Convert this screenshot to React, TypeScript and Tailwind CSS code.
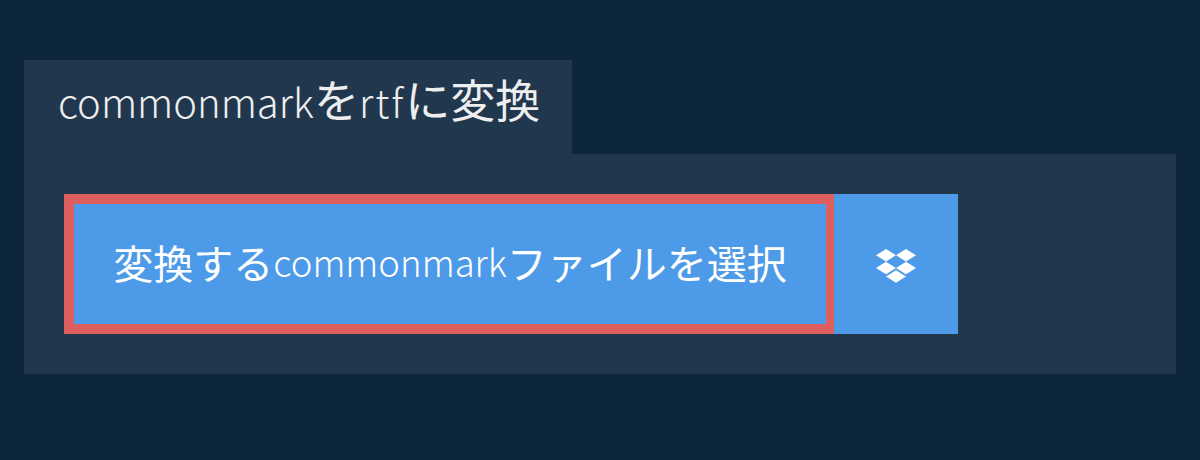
function DropboxIcon() {
  return (
    <svg viewBox="0 0 40 34" className="mt-1 h-[34px] w-10 fill-white">
      <path d="M10 0l10 6.3-10 6.3L0 6.3z" />
      <path d="M30 0l10 6.3-10 6.3-10-6.3z" />
      <path d="M10 12.7L20 19l-10 6.3L0 19z" />
      <path d="M30 12.7L40 19l-10 6.3L20 19z" />
      <path d="M20 21.2l10 6.3L20 33.8l-10-6.3z" />
    </svg>
  );
}

export default function App() {
  return (
    <div className="h-[460px] w-[1200px] overflow-hidden bg-[#0e263a] px-6 pt-[60px] font-['Noto_Sans_CJK_JP',sans-serif]">
      <div className="flex h-[94px] w-[548px] items-start bg-[#20374e] pl-[34px] pt-[11px]">
        <h1 className="text-[45px] leading-[56px] font-normal whitespace-nowrap text-[#eeeeee]">
          <span className="text-[40px] font-light">commonmark</span>を
          <span className="text-[40px] font-light tracking-[2px]">rtf</span>に変換
        </h1>
      </div>
      <section className="h-[220px] w-[1152px] bg-[#20374e] p-10">
        <div className="flex h-[140px] w-[894px]">
          <button className="flex w-[770px] items-center justify-center border-[10px] border-r-8 border-[#dc5e5e] bg-[#4d9ae8] pb-1 text-[40px] font-normal whitespace-nowrap text-white">
            変換する<span className="text-[36.5px] font-light">commonmark</span>ファイルを選択
          </button>
          <button className="flex flex-1 items-center justify-center bg-[#4d9ae8]">
            <DropboxIcon />
          </button>
        </div>
      </section>
    </div>
  );
}
